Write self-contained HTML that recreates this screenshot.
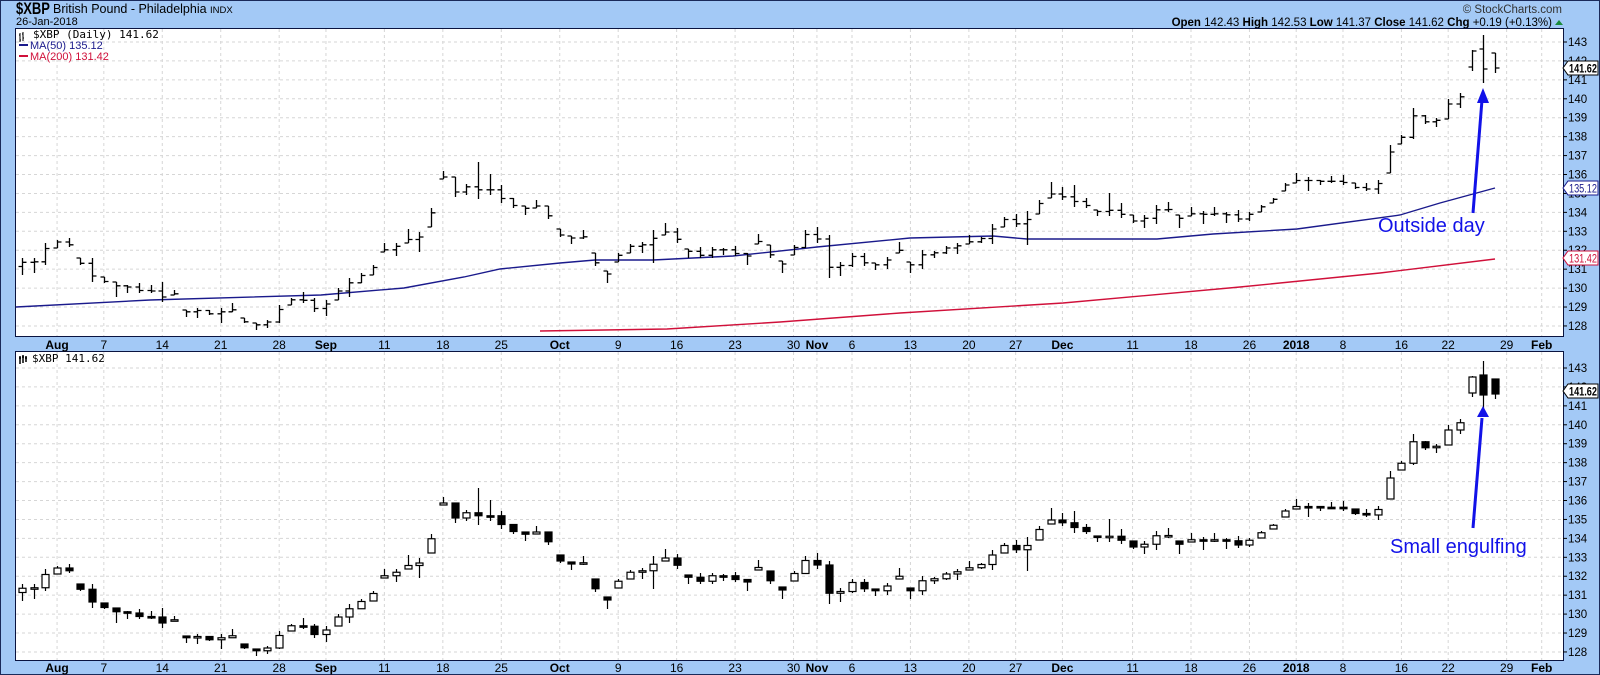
<!DOCTYPE html>
<html><head><meta charset="utf-8"><style>
html,body{margin:0;padding:0;width:1600px;height:675px;overflow:hidden;background:#a3c9f6;}
svg{display:block}
</style></head><body>
<svg id="s" width="1600" height="675" xmlns="http://www.w3.org/2000/svg" font-family="Liberation Sans, sans-serif">
<rect x="0.5" y="0.5" width="1599" height="674" fill="#a3c9f6" stroke="#1a2a5a"/>
<text x="16" y="14" font-size="17" font-weight="bold" fill="#000" textLength="34" lengthAdjust="spacingAndGlyphs">$XBP</text>
<text x="53" y="13" font-size="12.5" fill="#000">British Pound - Philadelphia <tspan font-size="9.5">INDX</tspan></text>
<text x="16" y="25" font-size="11" fill="#000">26-Jan-2018</text>
<text x="1562" y="13" font-size="11.5" fill="#333" text-anchor="end">© StockCharts.com</text>
<text x="1552" y="26" font-size="11.5" fill="#000" text-anchor="end"><tspan font-weight="bold">Open</tspan> 142.43 <tspan font-weight="bold">High</tspan> 142.53 <tspan font-weight="bold">Low</tspan> 141.37 <tspan font-weight="bold">Close</tspan> 141.62 <tspan font-weight="bold">Chg</tspan> +0.19 (+0.13%)</text>
<polygon points="1555,25 1563,25 1559,20" fill="#1a8a3a"/>
<rect x="15.5" y="28.5" width="1548" height="308" fill="#fff" stroke="#0a1440"/>
<rect x="15.5" y="351.5" width="1548" height="309" fill="#fff" stroke="#0a1440"/>
<g id="g"></g>
</svg>
<script>
var NS="http://www.w3.org/2000/svg",g=document.getElementById('g');
function el(t,a,txt){var e=document.createElementNS(NS,t);for(var k in a)e.setAttribute(k,a[k]);if(txt!=null)e.textContent=txt;g.appendChild(e);return e;}
function X(i){return 22+11.69*i;}
var R=[[258,275],[258,273],[243,265],[240,248],[238,247],[258,265],[258,282],[277,283],[282,297],[285,293],[283,293],[285,293],[282,302],[290,295],[310,317],[308,318],[310,315],[308,323],[303,312],[318,323],[323,330],[320,328],[305,323],[298,305],[292,303],[298,312],[300,316],[288,300],[278,297],[273,283],[265,275],[243,252],[243,256],[229,243],[232,252],[208,227],[171,179],[177,197],[184,195],[162,199],[174,195],
[185,203],[198,208],[206,215],[200,208],[206,219],[229,237],[236,244],[230,239],[253,266],[271,283],[253,262],[244,253],[242,253],[230,263],[223,235],[228,243],[249,258],[247,258],[247,258],[248,255],[246,256],[253,265],[234,244],[245,258],[261,273],[245,255],[230,248],[227,243],[235,278],[262,276],[253,267],[253,266],[263,270],[257,269],[242,253],
[262,273],[250,269],[251,258],[246,254],[243,254],[235,244],[237,243],[224,244],[217,227],[214,227],[211,245],[200,214],[182,198],[187,200],[185,207],[198,208],[210,216],[193,216],[203,218],[215,223],[215,228],[205,224],[202,212],[215,228],[207,216],[211,224],[207,216],[212,223],[210,222],[212,221],[205,212],[198,203],
[183,191],[173,183],[177,191],[180,185],[176,183],[175,185],[183,189],[183,191],[180,194],[145,173],[135,144],[108,139],[115,124],[118,127],[99,119],[93,108],[50,71],[35,83],[53,73]];
var OV={124:[67,51],125:[49,69],126:[53,68]};
function PY(p){return 42+(143-p)*18.93;}
var OFF=326;
var labs=[[3,'Aug',1],[7,'7'],[12,'14'],[17,'21'],[22,'28'],[26,'Sep',1],[31,'11'],[36,'18'],[41,'25'],[46,'Oct',1],[51,'9'],[56,'16'],[61,'23'],[66,'30'],[68,'Nov',1],[71,'6'],[76,'13'],[81,'20'],[85,'27'],[89,'Dec',1],[95,'11'],[100,'18'],[105,'26'],[109,'2018',1],[113,'8'],[118,'16'],[122,'22'],[127,'29'],[130,'Feb',1]];
labs.forEach(function(l){var x=X(l[0]);
 el('line',{x1:x,y1:29,x2:x,y2:336,stroke:'#d6d6d6','stroke-dasharray':'3,3'});
 el('line',{x1:x,y1:352,x2:x,y2:660,stroke:'#d6d6d6','stroke-dasharray':'3,3'});
 [349,672].forEach(function(y){el('text',{x:x,y:y,'font-size':12,'text-anchor':'middle','font-weight':l[2]?'bold':'normal',fill:'#000'},l[1]);});
});
for(var p=128;p<=143;p++){var y=PY(p);
 el('line',{x1:16,y1:y,x2:1563,y2:y,stroke:'#d6d6d6','stroke-dasharray':'3,3'});
 el('line',{x1:16,y1:y+OFF,x2:1563,y2:y+OFF,stroke:'#d6d6d6','stroke-dasharray':'3,3'});
 [0,OFF].forEach(function(o){el('line',{x1:1563,y1:y+o,x2:1567,y2:y+o,stroke:'#000'});
 el('text',{x:1568,y:y+o+4,'font-size':11.5,fill:'#000'},String(p));});
}
el('polyline',{points:'16,307 150,300 321,295 404,288 464,277 500,269 560,263 595,260 653,260 733,256 817,247 910,238 993,236 1027,239 1157,239 1213,234 1297,229 1400,215 1440,203 1495,188',fill:'none',stroke:'#1a1a8c','stroke-width':1.4});
el('polyline',{points:'540,331 667,329 780,322 900,313 1063,303 1240,287 1380,273 1495,259',fill:'none',stroke:'#d0103a','stroke-width':1.4});
var prevC=null,d1='';
for(var i=0;i<R.length;i++){var hy=R[i][0],ly=R[i][1],m=(hy+ly)/2;
 var nm=i+1<R.length?(R[i+1][0]+R[i+1][1])/2:m;
 var o=prevC==null?m:Math.min(ly,Math.max(hy,prevC));
 var c=nm<m?hy+0.25*(ly-hy):hy+0.75*(ly-hy);
 if(OV[i]){o=OV[i][0];c=OV[i][1];}
 prevC=c;var x=Math.round(X(i))+0.5;
 d1+='M'+x+' '+hy+'V'+ly+'M'+(x-4)+' '+o.toFixed(1)+'H'+x+'M'+x+' '+c.toFixed(1)+'H'+(x+4);
 el('line',{x1:x,y1:hy+OFF,x2:x,y2:ly+OFF,stroke:'#000','stroke-width':1.2});
 var t=Math.min(o,c),b=Math.max(o,c);if(b-t<1.5){b=t+1.5;}
 el('rect',{x:x-3.5,y:t+OFF,width:7,height:b-t,fill:(c<o?'#fff':'#000'),stroke:'#000','stroke-width':1.2});
}
el('path',{d:d1,stroke:'#000','stroke-width':1.3,fill:'none'});
el('path',{d:'M20 33V42M19 35H20M20 40H21M23 32V41M22 34H23M23 38H24',stroke:'#000',fill:'none'});
el('text',{x:33,y:38,'font-size':11,'font-family':'DejaVu Sans Mono, monospace',fill:'#000'},'$XBP (Daily) 141.62');
el('line',{x1:19,y1:45,x2:28,y2:45,stroke:'#1a1a8c','stroke-width':2});
el('text',{x:30,y:49,'font-size':11,fill:'#1a1a8c'},'MA(50) 135.12');
el('line',{x1:19,y1:56,x2:28,y2:56,stroke:'#d0103a','stroke-width':2});
el('text',{x:30,y:60,'font-size':11,fill:'#d0103a'},'MA(200) 131.42');
el('path',{d:'M20 356V364M19 358H21M23 355V363M22 357H24M26 356V362M25 358H27',stroke:'#000','stroke-width':1.5,fill:'none'});
el('text',{x:32,y:362,'font-size':11,'font-family':'DejaVu Sans Mono, monospace',fill:'#000'},'$XBP 141.62');
function tag(y,txt,col,bold){el('polygon',{points:'1563,'+y+' 1568,'+(y-7)+' 1598,'+(y-7)+' 1598,'+(y+7)+' 1568,'+(y+7),fill:'#fff',stroke:col});
 el('text',{x:1569,y:y+4.5,'font-size':11.5,'font-weight':bold?'bold':'normal',fill:col,textLength:28,lengthAdjust:'spacingAndGlyphs'},txt);}
tag(68,'141.62','#000',1);tag(188,'135.12','#1a1a8c',0);tag(258,'131.42','#d0103a',0);tag(391,'141.62','#000',1);
el('line',{x1:1473,y1:213,x2:1482,y2:100,stroke:'#1212e8','stroke-width':3});
el('polygon',{points:'1483,88 1477,103 1489,103',fill:'#1212e8'});
el('text',{x:1378,y:232,'font-size':20,fill:'#1212e8'},'Outside day');
el('line',{x1:1473,y1:528,x2:1482,y2:418,stroke:'#1212e8','stroke-width':3});
el('polygon',{points:'1483,406 1477,417 1489,417',fill:'#1212e8'});
el('text',{x:1390,y:553,'font-size':20,fill:'#1212e8'},'Small engulfing');
</script>
</body></html>
